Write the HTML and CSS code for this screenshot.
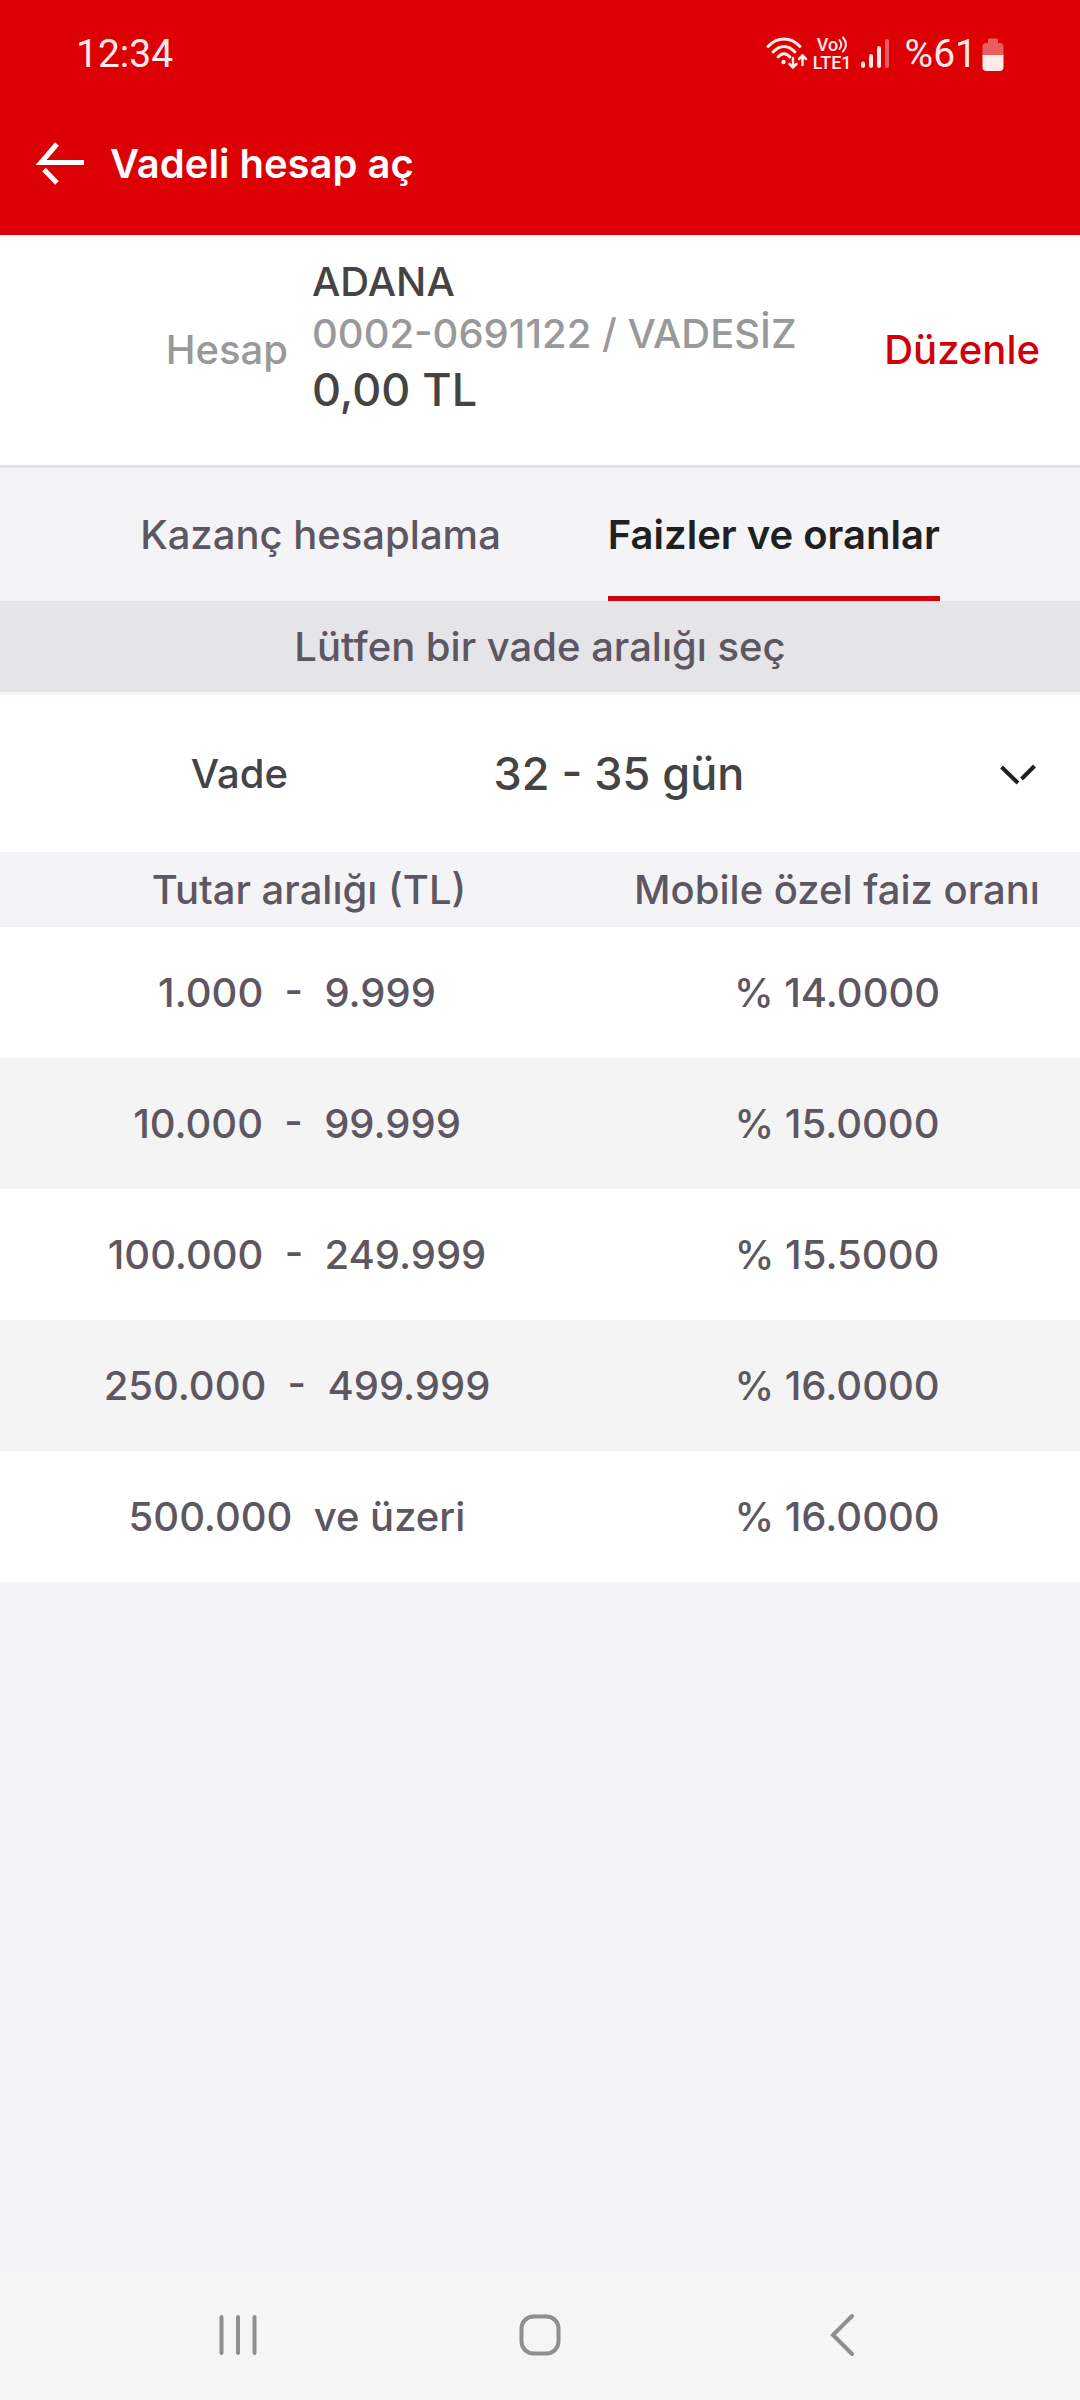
FILE: index.html
```html
<!DOCTYPE html>
<html lang="tr">
  <head>
    <meta charset="UTF-8" />
    <meta name="viewport" content="width=device-width, initial-scale=1.0" />
    <title>Vadeli hesap aç</title>
    <link rel="stylesheet" href="styles.css">
  </head>
  <body>
    <header class="header">
      <div class="status-bar">
        <span>12:34</span>
        <div class="status-icons">
          <svg class="wifi" width="42" height="34" viewBox="0 0 42 34" fill="none" stroke="currentColor" stroke-width="3" stroke-linecap="round">
            <path d="M2 9.500C11 -0.500 25 -0.500 34 9.500" />
            <path d="M7 15C14 7.500 22 7.500 29 15" />
            <path d="M12 20C16 15.500 20 15.500 24 20" />
            <circle cx="17.500" cy="25" r="2.200" fill="currentColor" stroke="none" />
            <path d="M27 21V30M23.500 27L27 30.500L30.500 27M36.500 28V19M33 22L36.500 18.500L40 22" stroke-width="2.500" />
          </svg>
          <div class="volte">
            <span class="vo">Vo<svg width="10" height="17" viewBox="0 0 10 17" fill="none" stroke="currentColor" stroke-width="2" stroke-linecap="round"><path d="M1.500 4Q5 8.500 1.500 13M5 1.500Q11 8.500 5 15.500" /></svg></span>
            <span>LTE1</span>
          </div>
          <svg class="signal" width="28" height="30" viewBox="0 0 28 30" fill="none" stroke="currentColor" stroke-width="4" stroke-linecap="round">
            <path d="M2 24.500V27M10 17V27M18 9V27" />
            <path d="M26 2V27" opacity="0.400" />
          </svg>
          <span class="percent">%61</span>
          <svg width="22" height="33" viewBox="0 0 22 33" fill="currentColor">
            <path d="M6 5V2Q6 0.500 7.500 0.500H14.500Q16 0.500 16 2V5H18Q21.500 5 21.500 8.500V17H0.500V8.500Q0.500 5 4 5Z" opacity="0.400" />
            <path d="M0.500 17H21.500V29Q21.500 33 17.500 33H4.500Q0.500 33 0.500 29Z" />
          </svg>
        </div>
      </div>
      <div class="toolbar">
        <button type="button" class="back" aria-label="Geri">
          <svg width="48" height="44" viewBox="0 0 48 44" fill="none" stroke="currentColor" stroke-width="5">
            <path d="M21 2L5 20.500H48M8 27.500L21 41" />
          </svg>
        </button>
        <h1>Vadeli hesap aç</h1>
      </div>
    </header>

    <main>
      <section class="account">
        <span class="label">Hesap</span>
        <div class="details">
          <p>ADANA</p>
          <p class="number">0002-0691122 / VADESİZ</p>
          <p class="balance">0,00 TL</p>
        </div>
        <a href="#" class="edit">Düzenle</a>
      </section>

      <nav class="tabs">
        <button type="button" class="tab">Kazanç hesaplama</button>
        <button type="button" class="tab active">Faizler ve oranlar</button>
      </nav>

      <p class="hint">Lütfen bir vade aralığı seç</p>

      <div class="term">
        <label class="label" for="vade">Vade</label>
        <div class="select">
          <select id="vade">
            <option>32 - 35 gün</option>
          </select>
          <svg width="36" height="22" viewBox="0 0 36 22" fill="none" stroke="currentColor" stroke-width="4">
            <path d="M1.500 4L18 20M21.500 16L34.500 3" />
          </svg>
        </div>
      </div>

      <table class="rates">
        <thead>
          <tr>
            <th>Tutar aralığı (TL)</th>
            <th>Mobile özel faiz oranı</th>
          </tr>
        </thead>
        <tbody>
          <tr>
            <td>1.000&nbsp; - &nbsp;9.999</td>
            <td>% 14.0000</td>
          </tr>
          <tr>
            <td>10.000&nbsp; - &nbsp;99.999</td>
            <td>% 15.0000</td>
          </tr>
          <tr>
            <td>100.000&nbsp; - &nbsp;249.999</td>
            <td>% 15.5000</td>
          </tr>
          <tr>
            <td>250.000&nbsp; - &nbsp;499.999</td>
            <td>% 16.0000</td>
          </tr>
          <tr>
            <td>500.000&nbsp; ve üzeri</td>
            <td>% 16.0000</td>
          </tr>
        </tbody>
      </table>
    </main>

    <footer class="nav-bar">
      <button type="button" aria-label="Son uygulamalar">
        <svg width="44" height="44" viewBox="0 0 44 44" fill="none" stroke="currentColor" stroke-width="4" stroke-linecap="round">
          <path d="M5.500 4V40M22 4V40M38.500 4V40" />
        </svg>
      </button>
      <button type="button" aria-label="Ana ekran">
        <svg width="44" height="44" viewBox="0 0 44 44" fill="none" stroke="currentColor" stroke-width="4">
          <rect x="3.500" y="3.500" width="37" height="37" rx="12" />
        </svg>
      </button>
      <button type="button" aria-label="Geri">
        <svg width="44" height="44" viewBox="0 0 44 44" fill="none" stroke="currentColor" stroke-width="4" stroke-linecap="round">
          <path d="M32 3L13 22L32 41" />
        </svg>
      </button>
    </footer>
  </body>
</html>
```

FILE: styles.css
```css
* {
  margin: 0;
  padding: 0;
  box-sizing: border-box;
}
body {
  display: flex;
  flex-direction: column;
  min-height: 100vh;
  background: #f4f4f7;
  color: #444;
  font-family: Inter, "Liberation Sans", sans-serif;
  font-size: 40px;
  font-weight: 500;
  line-height: 52px;
}
button,
select {
  border: none;
  background: none;
  color: inherit;
  font: inherit;
  cursor: pointer;
}
svg {
  display: block;
  flex-shrink: 0;
}
main {
  flex: 1;
}

/* header */
.header {
  background: #dc0004;
  color: #fff;
}
.status-bar {
  display: flex;
  justify-content: space-between;
  align-items: center;
  padding: 16px 76px 0;
  height: 92px;
  color: #ffe9e9;
  font-family: Roboto, sans-serif;
  font-size: 39px;
  font-weight: 400;
}
.status-icons {
  display: flex;
  align-items: center;
}
.volte {
  display: flex;
  flex-direction: column;
  margin: 0 9px 0 5px;
  font-size: 18px;
  font-weight: 500;
  line-height: 18px;
}
.vo {
  display: flex;
  padding-left: 4px;
}
.percent {
  margin: 0 5px 0 16px;
}
.toolbar {
  display: flex;
  align-items: center;
  gap: 26px;
  padding: 0 36px;
  height: 143px;
}
.toolbar h1 {
  font-size: 40px;
  font-weight: 600;
}

/* account */
.label {
  width: 288px;
  text-align: right;
}
.account {
  display: flex;
  align-items: center;
  gap: 24px;
  padding-right: 40px;
  background: #fff;
  border-bottom: 3px solid #e5e5e8;
}
.account .label,
.number {
  color: #999;
}
.details {
  flex: 1;
  padding: 21px 0 45px;
}
.balance {
  font-size: 45px;
  line-height: 60px;
}
.edit {
  color: #d10008;
  text-decoration: none;
}

/* tabs */
.tabs {
  display: flex;
  justify-content: center;
  gap: 107px;
}
.tab {
  height: 133px;
  border-top: 5px solid transparent;
  border-bottom: 5px solid transparent;
  color: #5d5761;
}
.tab.active {
  border-bottom-color: #d6000a;
  color: #202020;
  font-weight: 600;
}
.hint {
  padding: 20px 0 19px;
  background: #e5e4e9;
  border-bottom: 3px solid #f4f4f7;
  color: #5d5761;
  text-align: center;
}

/* term */
.term {
  display: flex;
  align-items: center;
  gap: 24px;
  height: 157px;
  padding-right: 40px;
  background: #fff;
}
.select {
  position: relative;
  flex: 1;
}
.select select {
  width: 100%;
  padding-right: 114px;
  appearance: none;
  font-size: 45px;
  line-height: 60px;
  text-align: center;
  text-align-last: center;
}
.select svg {
  position: absolute;
  top: 50%;
  right: 4px;
  transform: translateY(-50%);
  color: #202020;
  pointer-events: none;
}

/* rates */
.rates {
  width: 100%;
  table-layout: fixed;
  border-collapse: collapse;
  color: #5d5761;
  text-align: center;
}
.rates th {
  height: 75px;
  font-weight: 500;
}
.rates th:first-child {
  width: 55%;
  padding-left: 24px;
}
.rates td {
  height: 131px;
  background: #fff;
}
.rates tr:nth-child(even) td {
  background: #f4f4f4;
}

/* system navigation */
.nav-bar {
  display: flex;
  justify-content: center;
  gap: 258px;
  padding: 40px 0 43px;
  background: #f5f5f5;
  color: #8f8f8f;
}
```
